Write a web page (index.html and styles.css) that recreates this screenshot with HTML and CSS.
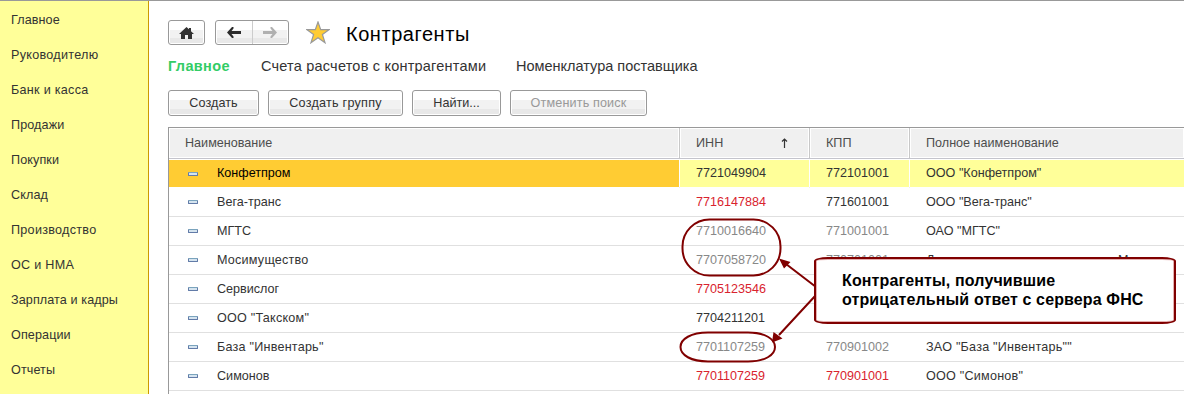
FILE: index.html
```html
<!DOCTYPE html>
<html lang="ru">
<head>
<meta charset="utf-8">
<title>Контрагенты</title>
<link rel="stylesheet" href="styles.css">
</head>
<body>
<div class="app">
  <nav class="sidebar">
    <a>Главное</a><a class="wide">Руководителю</a><a class="wide">Банк и касса</a><a>Продажи</a><a>Покупки</a><a>Склад</a><a class="wide">Производство</a><a class="wide">ОС и НМА</a><a>Зарплата и кадры</a><a>Операции</a><a>Отчеты</a>
  </nav>
  <main class="content">
    <header class="titlebar">
      <span class="tool home"><svg width="15" height="12" viewBox="0 0 15 12"><path d="M7.5 0L10 2.3V1H12V4.2L15 7H13V12H9V8H6V12H2V7H0Z" fill="#333"/></svg></span>
      <span class="tool history">
        <span><svg width="14" height="11" viewBox="0 0 14 11"><path d="M0 5.500L5 0H6.500V1.500L4.500 4H14V7H4.500L6.500 9.500V11H5Z" fill="#2b2b2b"/></svg></span>
        <span><svg width="14" height="11" viewBox="0 0 14 11"><path d="M14 5.500L9 0H7.500V1.500L9.500 4H0V7H9.500L7.500 9.500V11H9Z" fill="#b0b0b0"/></svg></span>
      </span>
      <svg class="star" width="24" height="23" viewBox="0 0 24 23"><path d="M12 1L14.7 8.7H23L16.4 13.4L19 21.7L12 16.7L5 21.7L7.6 13.4L1 8.7H9.3Z" fill="#fc3" stroke="#999" stroke-width="1.2"/></svg>
      <h1>Контрагенты</h1>
    </header>
    <div class="tabs"><b>Главное</b><span class="t2">Счета расчетов с контрагентами</span><span class="t3">Номенклатура поставщика</span></div>
    <div class="commands">
      <span class="button create">Создать</span><span class="button group">Создать группу</span><span class="button find">Найти...</span><span class="button cancel">Отменить поиск</span>
    </div>
    <section class="table">
      <div class="row head"><span>Наименование</span><span>ИНН<svg class="sort" width="7" height="10" viewBox="0 0 7 10"><path d="M3.5 10V1M1 3.5L3.5 1L6 3.5" fill="none" stroke="#333" stroke-width="1.2"/></svg></span><span>КПП</span><span>Полное наименование</span></div>
      <div class="row selected"><span><i></i>Конфетпром</span><span>7721049904</span><span>772101001</span><span>ООО "Конфетпром"</span></div>
      <div class="row"><span><i></i>Вега-транс</span><span class="red">7716147884</span><span>771601001</span><span>ООО "Вега-транс"</span></div>
      <div class="row"><span><i></i>МГТС</span><span class="gray">7710016640</span><span class="gray">771001001</span><span>ОАО "МГТС"</span></div>
      <div class="row"><span class="wide"><i></i>Мосимущество</span><span class="gray">7707058720</span><span class="gray">770701001</span><span>Департамент имущества города Москвы</span></div>
      <div class="row"><span><i></i>Сервислог</span><span class="red">7705123546</span><span></span><span></span></div>
      <div class="row"><span class="wide"><i></i>ООО "Такском"</span><span>7704211201</span><span></span><span></span></div>
      <div class="row"><span class="wide"><i></i>База "Инвентарь"</span><span class="gray">7701107259</span><span class="gray">770901002</span><span class="wide">ЗАО "База "Инвентарь""</span></div>
      <div class="row"><span><i></i>Симонов</span><span class="red">7701107259</span><span class="red">770901001</span><span class="wide">ООО "Симонов"</span></div>
    </section>
  </main>
  <svg class="marks" width="1184" height="394" viewBox="0 0 1184 394">
    <g fill="none" stroke="#800000" stroke-width="2">
      <rect x="682.5" y="219.5" width="98" height="56" rx="27" ry="27"/>
      <path d="M708 332.500H748C765 332.500 775 339 775 347S765 361.500 748 361.500H708C691 361.500 680.500 355 680.500 347S691 332.500 708 332.500Z"/>
      <path d="M816 287L786 264M816 295L779 335"/>
    </g>
    <path d="M779 258.500L790.500 262L784 268.500ZM772 342.500L773.500 332L782.500 338.500Z" fill="#800000"/>
  </svg>
  <div class="callout">Контрагенты, получившие<br>отрицательный ответ с сервера ФНС</div>
</div>
</body>
</html>
```
FILE: styles.css
```css
* { box-sizing: border-box; }
body { margin: 0; background: #fff; color: #333; font: 12.6px/16px "Liberation Sans", Arial, sans-serif; }
.app { position: relative; width: 1184px; height: 394px; border-top: 1px solid #999; display: flex; overflow: hidden; }
.sidebar { width: 149px; flex: none; background: #ff9; border-right: 1px solid #c90; padding: 2px 0 0 11px; display: flex; flex-direction: column; }
.sidebar a { height: 35px; line-height: 34px; white-space: nowrap; letter-spacing: .1px; }
.sidebar .wide { letter-spacing: .28px; }
.content { flex: 1; min-width: 0; padding: 19px 0 0 19px; }
.titlebar { height: 25px; display: flex; align-items: center; }
.tool, .button { border: 1px solid #999; border-radius: 3px; background: linear-gradient(#fff 0 38%, #f2f2f2 38% 74%, #e8e8e8 74%); box-shadow: inset 0 0 0 1px #fff; display: flex; align-items: center; justify-content: center; }
.home { width: 37px; height: 25px; }
.history { width: 74px; height: 25px; margin-left: 10px; }
.history span { flex: 1; height: 23px; display: flex; align-items: center; justify-content: center; }
.history span + span { border-left: 1px solid #ccc; }
.star { margin: 0 0 0 17px; }
h1 { margin: 3px 0 0 16px; font-size: 20px; line-height: 24px; letter-spacing: .55px; font-weight: 400; color: #000; }
.tabs { display: flex; margin-top: 11px; height: 20px; line-height: 20px; font-size: 14.5px; white-space: nowrap; }
.tabs b { width: 93px; letter-spacing: .35px; color: #3c6; }
.t2 { width: 255px; letter-spacing: .21px; }
.commands { display: flex; margin-top: 14px; height: 26px; }
.button { height: 26px; margin-right: 9px; }
.create { width: 91px; letter-spacing: .1px; }
.group { width: 135px; letter-spacing: .25px; }
.find { width: 89px; }
.cancel { width: 137px; letter-spacing: .15px; color: #999; }
.table { margin-top: 11px; border-top: 1px solid #999; border-left: 1px solid #999; height: 267px; }
.row { height: 29px; display: grid; grid-template-columns: 511px 130px 100px 1fr; border-bottom: 1px solid #e0e0e0; line-height: 27px; white-space: nowrap; }
.row > span { padding-left: 16px; display: flex; align-items: center; border-right: 1px solid transparent; }
.row .wide { letter-spacing: .22px; }
.head { height: 31px; border-bottom-color: #c4c4cc; color: #4d4d4d; }
.head > span { background: #f0f0f0; border-right-color: #c8c8c8; box-shadow: inset 0 0 0 1px #fff; }
.row > span:last-child { border-right: 0; }
.sort { margin-left: 58px; }
.selected > span { background: #ff9 padding-box; border-top: 1px solid #fff; border-bottom: 1px solid #fff; }
.selected > span:first-child { background: #fc3 padding-box; color: #000; }
i { width: 10px; height: 4px; margin: 0 19px 0 3px; border: 1px solid #627ba8; border-top-color: #7aa4bd; border-radius: 1px; background: #d5e4ef; }
.red { color: #d9232e; }
.gray { color: #888; }
.marks { position: absolute; left: 0; top: -1px; }
.callout { position: absolute; left: 814px; top: 256px; width: 362px; height: 67px; padding: 12px 0 0 26px; border: 2px solid #800000; border-radius: 14px / 4px; background: #fff; box-shadow: inset 0 0 0 1px #e5b0b0; color: #000; font-size: 16px; line-height: 19px; letter-spacing: .13px; font-weight: 700; white-space: nowrap; }
```
